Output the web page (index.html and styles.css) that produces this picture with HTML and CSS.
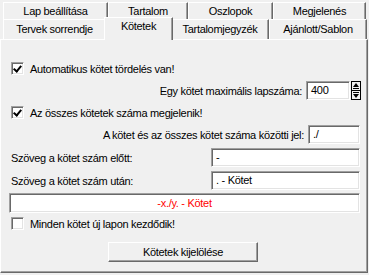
FILE: index.html
```html
<!DOCTYPE html>
<html lang="hu">
<head>
    <meta charset="UTF-8">
    <title>Kötetek</title>
    <link rel="stylesheet" href="styles.css">
</head>
<body>

<!-- Tab rows -->
<div class="tabs">
    <div class="tab-row back">
        <div class="tab w-lap">Lap beállítása</div>
        <div class="tab w-tart">Tartalom</div>
        <div class="tab w-osz">Oszlopok</div>
        <div class="tab w-megj">Megjelenés</div>
    </div>
    <div class="tab-row front">
        <div class="tab w-terv">Tervek sorrendje</div>
        <div class="tab active w-kot">Kötetek</div>
        <div class="tab w-tjegy">Tartalomjegyzék</div>
        <div class="tab w-ajan">Ajánlott/Sablon</div>
    </div>
</div>

<!-- Page: Kötetek -->
<div class="panel">
    <div class="row check-row">
        <span class="box checked"></span>
        <span>Automatikus kötet tördelés van!</span>
    </div>

    <div class="row field-right">
        <span class="label">Egy kötet maximális lapszáma:</span>
        <span class="input w-num">400</span>
        <svg class="spin" width="10" height="19" viewBox="0 0 10 19">
            <rect x="0.5" y="0.5" width="9" height="18" fill="#f0f0f0" stroke="#000"/>
            <line x1="0" y1="9.5" x2="10" y2="9.5" stroke="#000"/>
            <polygon points="2,6 5,2 8,6" fill="#000"/>
            <rect x="2" y="7" width="6" height="1" fill="#000"/>
            <rect x="2" y="11" width="6" height="1" fill="#000"/>
            <polygon points="2,13 5,17 8,13" fill="#000"/>
        </svg>
    </div>

    <div class="row check-row">
        <span class="box checked"></span>
        <span>Az összes kötetek száma megjelenik!</span>
    </div>

    <div class="row field-right gap5">
        <span class="label">A kötet és az összes kötet száma közötti jel:</span>
        <span class="input w-jel">./</span>
    </div>

    <div class="row field-left gap5">
        <span class="label">Szöveg a kötet szám előtt:</span>
        <span class="input w-text">-</span>
    </div>

    <div class="row field-left">
        <span class="label">Szöveg a kötet szám után:</span>
        <span class="input w-text">. - Kötet</span>
    </div>

    <div class="row preview">-x./y. - Kötet</div>

    <div class="row check-row gap2">
        <span class="box"></span>
        <span>Minden kötet új lapon kezdődik!</span>
    </div>

    <div class="row button-row">
        <div class="button">Kötetek kijelölése</div>
    </div>
</div>

</body>
</html>
```

FILE: styles.css
```css
body {
    margin: 0;
    width: 369px;
    height: 275px;
    overflow: hidden;
    background-color: #f0f0f0;
    font-family: "Liberation Sans", Arial, sans-serif;
    font-size: 11px;
    letter-spacing: -0.3px;
    color: #000;
}
/* Tabs */
.tabs {
    padding: 2px 0 0 3px;
    height: 37px;
    position: relative;
    z-index: 1;
}
.tab-row {
    display: flex;
}
.tab {
    box-sizing: border-box;
    display: flex;
    align-items: center;
    justify-content: center;
    background-color: #f0f0f0;
    border-top: 1px solid #fff;
    border-left: 1px solid #fff;
    border-right: 1px solid #696969;
    box-shadow: inset -1px 0 #a0a0a0;
}
.back .tab {
    height: 17px;
}
.front .tab {
    height: 20px;
    padding-bottom: 1px;
}
.tab.active {
    height: 23px;
    margin: -2px -2px -1px -2px;
    padding-bottom: 7px;
    position: relative;
    z-index: 2;
}
.w-lap { width: 105px; }
.w-tart { width: 80px; }
.w-osz { width: 85px; }
.w-megj { width: 93px; }
.w-terv { width: 103px; }
.w-kot { width: 69px; }
.w-tjegy { width: 98px; }
.w-ajan { width: 98px; }

/* Panel */
.panel {
    box-sizing: border-box;
    width: 368px;
    height: 234px;
    padding: 20px 0 0 8px;
    border-top: 1px solid #fff;
    border-left: 1px solid #fff;
    border-right: 1px solid #696969;
    border-bottom: 1px solid #696969;
    box-shadow: inset -1px -1px #a0a0a0;
}
.row {
    display: flex;
    align-items: center;
    width: 351px;
}
.check-row {
    height: 17px;
    margin-top: 4px;
}
.check-row:first-child {
    margin-top: 0;
}
.gap2 { margin-top: 2px; }
.gap5 { margin-top: 5px; }

.box {
    box-sizing: border-box;
    width: 13px;
    height: 13px;
    margin: 0 6px 0 2px;
    background-color: #fff;
    border: 1px solid;
    border-color: #a0a0a0 #fff #fff #a0a0a0;
    box-shadow: inset 1px 1px #696969, inset -1px -1px #e3e3e3;
    position: relative;
    overflow: hidden;
}
.box.checked::after {
    content: "";
    position: absolute;
    left: 3px;
    top: 1px;
    width: 3px;
    height: 6px;
    border: solid #000;
    border-width: 0 2px 2px 0;
    transform: rotate(40deg);
}

.field-right {
    height: 19px;
    margin-top: 4px;
    justify-content: flex-end;
}
.field-right .label {
    margin-right: 4px;
}
.field-left {
    height: 19px;
    margin-top: 4px;
    padding-left: 2px;
    box-sizing: border-box;
}
.field-left .label {
    flex: 1;
}
.input {
    box-sizing: border-box;
    height: 19px;
    padding: 2px 0 0 4px;
    background-color: #fff;
    border: 1px solid;
    border-color: #a0a0a0 #fff #fff #a0a0a0;
    box-shadow: inset 1px 1px #696969, inset -1px -1px #e3e3e3;
}
.w-num { width: 44px; margin-right: 1px; }
.w-jel { width: 52px; }
.w-text { width: 149px; }
.spin {
    margin-right: -1px;
}

.preview {
    box-sizing: border-box;
    height: 20px;
    margin-top: 3px;
    justify-content: center;
    color: #ff0000;
    background-color: #fff;
    border: 1px solid;
    border-color: #a0a0a0 #fff #fff #a0a0a0;
    box-shadow: inset 1px 1px #696969, inset -1px -1px #e3e3e3;
}

.button-row {
    margin-top: 10px;
    padding-left: 99px;
}
.button {
    box-sizing: border-box;
    width: 150px;
    height: 20px;
    display: flex;
    align-items: center;
    justify-content: center;
    border: 1px solid;
    border-color: #fff #696969 #696969 #fff;
    box-shadow: inset -1px -1px #a0a0a0;
}
```
